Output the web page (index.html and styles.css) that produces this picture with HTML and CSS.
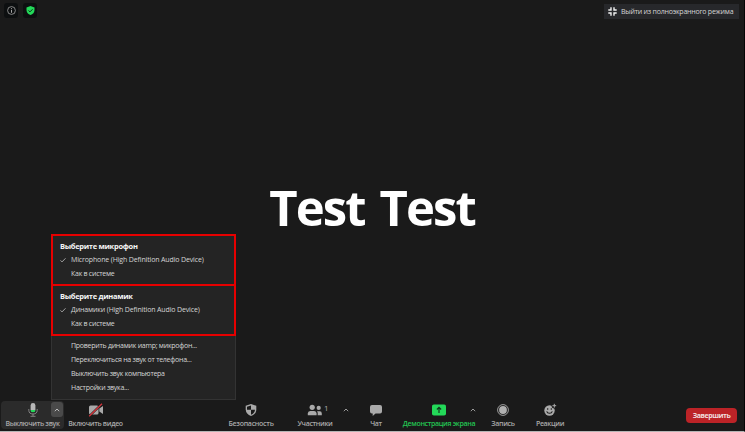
FILE: index.html
```
<!DOCTYPE html>
<html lang="ru">
<head>
<meta charset="utf-8">
<title>Конференция</title>
<link rel="stylesheet" href="styles.css">
</head>
<body>
<main class="meeting">
  <header class="top">
    <div class="badges">
      <span class="badge"><svg width="9" height="9" viewBox="0 0 9 9"><circle cx="4.5" cy="4.5" r="3.9" fill="none" stroke="#a5a5a5" stroke-width=".8"/><path d="M4.5 4v2.8M4.5 2.2v1" stroke="#b5b5b5" stroke-width=".9"/></svg></span>
      <span class="badge"><svg width="9" height="9" viewBox="0 0 9 9"><path d="M4.5 0 8.5 1.4V4C8.500 6.500 6.800 8.200 4.500 9 2.200 8.200.5 6.500.5 4V1.400Z" fill="#23d959"/><path d="M2.500 4.500 4 5.900 6.600 3.200" fill="none" stroke="#10351b" stroke-width="1"/></svg></span>
    </div>
    <button class="exit"><svg width="9" height="9" viewBox="0 0 9 9"><path d="M3 .3V3H.3M6 .3V3h2.700M3 8.700V6H.3M6 8.700V6h2.700" fill="none" stroke="#f2f2f2" stroke-width="1.400"/></svg><span>Выйти из полноэкранного режима</span></button>
  </header>
  <h1 class="name">Test Test</h1>
  <footer class="toolbar">
    <div class="tool mic">
      <svg width="10" height="14" viewBox="0 0 10 14"><rect x="2.600" y="0" width="4.800" height="9" rx="2.400" fill="#b8b8b8"/><path d="M2.600 7h4.800a2.400 2.200 0 0 1-4.800 0Z" fill="#23d959"/><path d="M.8 6v1.200a4.200 3.800 0 0 0 8.400 0V6M5 11v2M2.500 13.300h5" fill="none" stroke="#8c8c8c" stroke-width=".9"/></svg>
      <span class="label">Выключить звук</span>
      <span class="caret"><svg width="6" height="4" viewBox="0 0 6 4"><path d="M.8 3.200 3 1l2.200 2.200" fill="none" stroke="#bcbcbc"/></svg></span>
    </div>
    <div class="tool video">
      <svg width="16" height="14" viewBox="0 0 16 14"><rect x="1" y="2.500" width="9.500" height="9" rx="1.500" fill="#a9a9a9"/><path d="M11.300 5.500 15 3v8l-3.700-2.500Z" fill="#a9a9a9"/><path d="M1.200 13.200 14 .8" stroke="#1a1a1a" stroke-width="2.200"/><path d="M1.200 13.200 14 .8" stroke="#d9363e" stroke-width="1.200"/></svg>
      <span class="label">Включить видео</span>
    </div>
    <div class="tool security">
      <svg width="12" height="14" viewBox="0 0 12 14"><path d="M6 1 11.300 2.800V6.500C11.300 9.800 9 12 6 13 3 12 .7 9.800.7 6.500V2.800Z" fill="#aaa"/><path d="M6 2.400V6.700H2V3.700ZM6 6.700h4C9.800 9.200 8.300 10.800 6 11.700Z" fill="#1a1a1a"/></svg>
      <span class="label">Безопасность</span>
    </div>
    <div class="tool people">
      <svg width="16" height="14" viewBox="0 0 16 14"><circle cx="5.200" cy="4.300" r="2.600" fill="#aaa"/><path d="M.8 12.200V10.500Q.8 8 3.200 8h4q2.400 0 2.400 2.500v1.700Z" fill="#aaa"/><circle cx="11.700" cy="4.900" r="2.100" fill="#aaa"/><path d="M10.700 12.200v-2q0-1.300-.8-2h2.900q2 0 2 2.200v1.800Z" fill="#aaa"/></svg>
      <span class="count">1</span>
      <span class="label">Участники</span>
      <span class="caret"><svg width="6" height="4" viewBox="0 0 6 4"><path d="M.8 3.200 3 1l2.200 2.200" fill="none" stroke="#999"/></svg></span>
    </div>
    <div class="tool chat">
      <svg width="14" height="14" viewBox="0 0 14 14"><path d="M3 2h8q2 0 2 2v4.500q0 2-2 2H6.500L3.700 13v-2.500H3q-2 0-2-2V4q0-2 2-2Z" fill="#aaa"/></svg>
      <span class="label">Чат</span>
    </div>
    <div class="tool share">
      <svg width="14" height="14" viewBox="0 0 14 14"><rect y="1.500" width="14" height="11" rx="1.800" fill="#23d959"/><path d="M7 10V4.600M4.900 6.500 7 4.400l2.100 2.100" fill="none" stroke="#143b20" stroke-width="1.200"/></svg>
      <span class="label">Демонстрация экрана</span>
      <span class="caret"><svg width="6" height="4" viewBox="0 0 6 4"><path d="M.8 3.200 3 1l2.200 2.200" fill="none" stroke="#999"/></svg></span>
    </div>
    <div class="tool record">
      <svg width="12" height="14" viewBox="0 0 12 14"><circle cx="6" cy="7" r="5.400" fill="none" stroke="#aaa" stroke-width=".9"/><circle cx="6" cy="7" r="3.900" fill="#b0b0b0"/></svg>
      <span class="label">Запись</span>
    </div>
    <div class="tool react">
      <svg width="14" height="14" viewBox="0 0 14 14"><circle cx="6.500" cy="7.500" r="5.200" fill="#aaa"/><circle cx="11.300" cy="2.700" r="2.700" fill="#1a1a1a"/><path d="M11.300.8v3.800M9.400 2.700h3.800" stroke="#aaa" stroke-width="1"/><path d="M4.700 5.300v1.500M8.300 5.300v1.500M3.700 8.300a2.900 2.700 0 0 0 5.600 0" fill="none" stroke="#1a1a1a" stroke-width="1.100"/></svg>
      <span class="label">Реакции</span>
    </div>
    <button class="end"><span>Завершить</span></button>
  </footer>
  <nav class="menu">
    <section class="group">
      <h2>Выберите микрофон</h2>
      <p class="checked"><svg width="6" height="6" viewBox="0 0 6 6"><path d="M.5 3.400 2 4.900 5.500 1.300" fill="none" stroke="#c4c4c4" stroke-width=".8"/></svg><span>Microphone (High Definition Audio Device)</span></p>
      <p>Как в системе</p>
    </section>
    <section class="group second">
      <h2>Выберите динамик</h2>
      <p class="checked"><svg width="6" height="6" viewBox="0 0 6 6"><path d="M.5 3.400 2 4.900 5.500 1.300" fill="none" stroke="#c4c4c4" stroke-width=".8"/></svg><span>Динамики (High Definition Audio Device)</span></p>
      <p>Как в системе</p>
    </section>
    <section class="actions">
      <p>Проверить динамик иamp; микрофон...</p>
      <p>Переключиться на звук от телефона...</p>
      <p>Выключить звук компьютера</p>
      <p>Настройки звука...</p>
    </section>
  </nav>
</main>
</body>
</html>
```
FILE: styles.css
```
* { box-sizing: border-box; margin: 0; padding: 0; }
body { background: #1a1a1a; font-family: "Open Sans", "Noto Sans", sans-serif; color: #d6d6d6; overflow: hidden; }
button { border: 0; font: inherit; color: inherit; }
svg { display: block; flex: none; }
.meeting { position: relative; width: 745px; height: 432px; display: flex; flex-direction: column; background: #1a1a1a; border-right: 1px solid #050505; border-bottom: 1px solid #b5b5b5; }
.top { height: 22px; padding: 3px 5px 0 4px; display: flex; justify-content: space-between; align-items: flex-start; }
.badges { display: flex; gap: 5px; }
.badge { width: 14px; height: 15px; border-radius: 3px; background: #0d0f10; display: grid; place-items: center; }
.exit { width: 135px; height: 15px; margin-top: 1px; padding-left: 4px; display: flex; align-items: center; gap: 4px; background: #27282b; font-size: 7px; line-height: 14px; letter-spacing: -.22px; white-space: nowrap; }
.name { flex: 1; padding: 152px 0 0; text-align: center; color: #fff; font-size: 49px; line-height: 67px; font-weight: 700; letter-spacing: -1.9px; word-spacing: 4px; }
.toolbar { height: 30px; display: flex; align-items: flex-start; color: #a9a9a9; font-size: 7px; font-weight: 600; letter-spacing: -.33px; }
.tool { position: relative; height: 28px; padding-top: 2px; display: flex; flex-direction: column; align-items: center; white-space: nowrap; border-radius: 4px; }
.label { line-height: 12px; margin-top: 1px; }
.mic { width: 63px; margin-left: 1px; background: #2b2b2b; }
.video { width: 63px; }
.security { width: 52px; margin-left: 98px; letter-spacing: -.27px; }
.people { width: 40px; margin-left: 18px; }
.chat { width: 24px; margin-left: 29px; }
.share { width: 74px; margin-left: 14px; color: #23c653; }
.record { width: 30px; margin-left: 12px; }
.react { width: 34px; margin-left: 15px; }
.caret { position: absolute; top: 7px; right: -14px; }
.share .caret { right: 0; }
.mic .caret { top: 1px; right: 1px; width: 12px; height: 15px; border-radius: 3px; background: #4a4a4a; display: grid; place-items: center; }
.count { position: absolute; top: 1px; left: 29px; line-height: 12px; font-weight: 400; font-size: 8px; }
.end { width: 51px; height: 15px; margin: 7px 7px 0 auto; border-radius: 4px; background: #bc2327; color: #f0dede; font-size: 7px; font-weight: 700; line-height: 14px; letter-spacing: -.45px; }
.menu { position: absolute; left: 51px; top: 234px; width: 185px; height: 166px; background: #242424; border: 1px solid #333; font-size: 7px; line-height: 14px; letter-spacing: -.26px; white-space: nowrap; }
.group { margin: -1px -1px 0; height: 52px; padding: 3px 0 0 7px; border: 2px solid #e60000; }
.group.second { margin-top: -2px; }
.group h2 { font-size: 7.5px; line-height: 14px; font-weight: 700; color: #f5f5f5; letter-spacing: -.3px; }
.group p { padding-left: 11px; }
.group .checked { padding-left: 0; display: flex; align-items: center; gap: 5px; letter-spacing: -.14px; }
.actions { padding: 3px 0 0 19px; }
```
